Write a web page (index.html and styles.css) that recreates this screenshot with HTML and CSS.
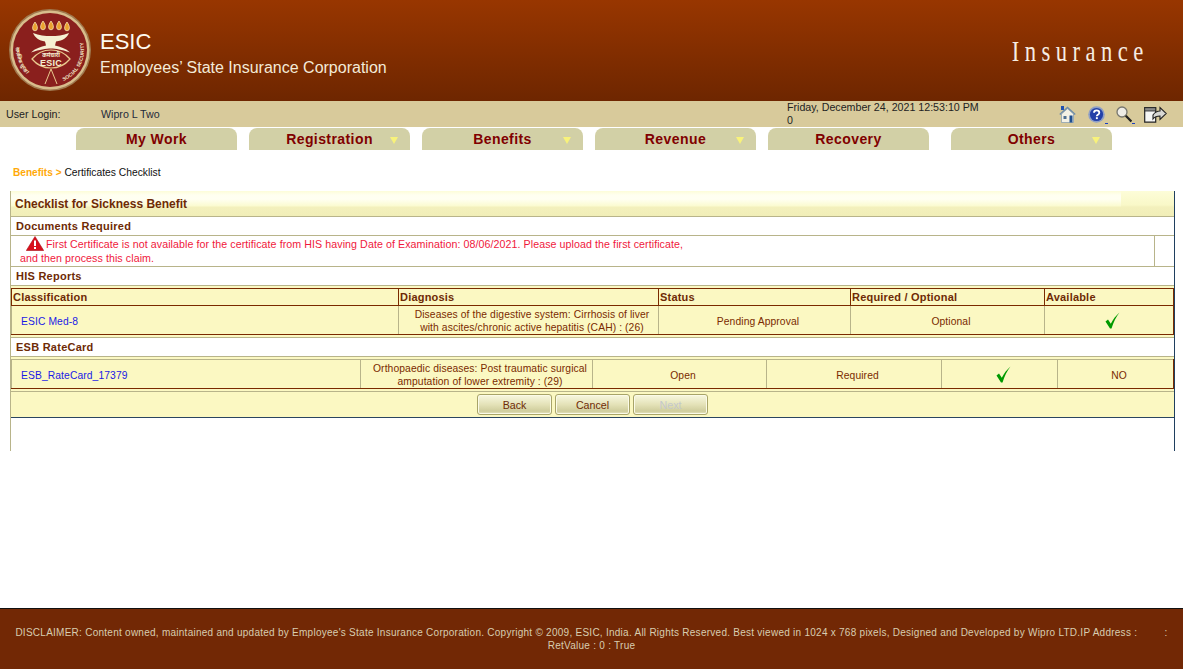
FILE: index.html
```html
<!DOCTYPE html>
<html lang="en">
<head>
<meta charset="utf-8">
<title>ESIC Insurance</title>
<link rel="stylesheet" href="styles.css">
</head>
<body>
<div class="page">
  <header class="banner">
    <svg class="logo" width="82" height="82" viewBox="0 0 82 82">
      <defs>
        <path id="arc-left" d="M7.500 38A33.500 33.500 0 0 0 30 72.600"/>
        <path id="arc-right" d="M54.500 72A33.500 33.500 0 0 0 74 33"/>
      </defs>
      <circle cx="41" cy="41" r="41" fill="#a07a50"/>
      <circle cx="41" cy="41" r="39.500" fill="#d8bd8c"/>
      <circle cx="41" cy="41" r="37" fill="#8a1f1d"/>
      <g fill="#eba22e" stroke="#fbeec0" stroke-width=".7">
        <path d="M26 13c1.800 2.500 2.400 4.300 2.400 6a2.400 2.800 0 0 1-4.800 0c0-1.700.6-3.500 2.400-6z"/>
        <path d="M34 12c1.800 2.500 2.400 4.300 2.400 6a2.400 2.800 0 0 1-4.800 0c0-1.700.6-3.500 2.400-6z"/>
        <path d="M42 12c1.800 2.500 2.400 4.300 2.400 6a2.400 2.800 0 0 1-4.800 0c0-1.700.6-3.500 2.400-6z"/>
        <path d="M50 12c1.800 2.500 2.400 4.300 2.400 6a2.400 2.800 0 0 1-4.800 0c0-1.700.6-3.500 2.400-6z"/>
        <path d="M58 13c1.800 2.500 2.400 4.300 2.400 6a2.400 2.800 0 0 1-4.800 0c0-1.700.6-3.500 2.400-6z"/>
      </g>
      <path d="M24 24c6 2.500 12 3 18 3s12-.5 18-3c-2 5-6 7.500-13 8.500l-1 4c5 1 11 3 15 7-9-3-14-4-19-4s-11 1-20 4c4-4 10-6 15-7l-1-4c-6-1-10-3.500-12-8.500z" fill="#f6efd2"/>
      <path d="M23 50C33 38 51 38 61 50 51 62 33 62 23 50z" fill="#8a1f1d" stroke="#e9c98e" stroke-width="1.200"/>
      <text class="logo-hi" x="42" y="47.500" text-anchor="middle">कर्मचारी</text>
      <text class="logo-en" x="42" y="57" text-anchor="middle">ESIC</text>
      <path d="M42 60 36 75M42 60l6 15" fill="none" stroke="#e9c98e" stroke-width="1"/>
      <text class="logo-side"><textPath href="#arc-left">सामाजिक सुरक्षा</textPath></text>
      <text class="logo-side"><textPath href="#arc-right">SOCIAL SECURITY</textPath></text>
    </svg>
    <div class="brand">
      <div class="brand-short">ESIC</div>
      <div class="brand-long">Employees’ State Insurance Corporation</div>
    </div>
    <div class="module">Insurance</div>
  </header>

  <div class="infobar">
    <span class="login-label">User Login:</span>
    <span class="login-name">Wipro L Two</span>
    <div class="clock"><div>Friday, December 24, 2021 12:53:10 PM</div><div>0</div></div>
    <div class="tools">
      <svg class="tool-home" width="17" height="17" viewBox="0 0 17 17">
        <path d="M.8 8.500 8.500 1.500l7.700 7" fill="none" stroke="#6e8ca8" stroke-width="1.500"/>
        <path d="M2.500 8 8.500 2.700 14.500 8v8.500h-12z" fill="#f4f1e4" stroke="#7f9ab0" stroke-width=".7"/>
        <rect x="4.500" y="10" width="3" height="3" fill="#4f6f8f"/>
        <rect x="10.500" y="9.500" width="3" height="7" fill="#1f4f8f"/>
        <rect x="2" y="0" width="3" height="4" fill="#2050b0"/>
      </svg>
      <span class="tool-help"><svg width="17" height="17" viewBox="0 0 17 17">
        <circle cx="8.500" cy="8.500" r="8.300" fill="#8f9fc6"/>
        <circle cx="8.500" cy="8.500" r="6.600" fill="#2340a8"/>
        <path d="M6 6.800c0-3.200 5.300-3.200 5.300 0 0 2-2.500 2-2.500 3.400" fill="none" stroke="#fff" stroke-width="1.800"/>
        <rect x="7.900" y="11.200" width="1.900" height="1.900" fill="#fff"/>
      </svg><i class="tick"></i></span>
      <span class="tool-find"><svg width="16" height="17" viewBox="0 0 16 17">
        <circle cx="6" cy="6" r="5" fill="#eeece6" stroke="#77776f" stroke-width="1.300"/>
        <path d="m9.800 9.800 5.600 5.700" stroke="#222" stroke-width="2.300"/>
      </svg><i class="tick"></i></span>
      <svg class="tool-exit" width="23" height="17" viewBox="0 0 23 17">
        <path d="M.7 1.700h11v14.500h-11z" fill="#f6f6f4" stroke="#222" stroke-width="1.200"/>
        <path d="M.7 1.700h11v3.300h-11z" fill="#8c8c8c" stroke="#222" stroke-width=".8"/>
        <path d="M9 9c2-3 5-4 7-4V1.500l6.300 6-6.300 6V10c-3 0-5 .5-7 3z" fill="#d8d8d4" stroke="#222" stroke-width="1.100"/>
      </svg>
    </div>
  </div>

  <nav class="menu">
    <a class="tab">My Work</a>
    <a class="tab has-sub">Registration</a>
    <a class="tab has-sub">Benefits</a>
    <a class="tab has-sub">Revenue</a>
    <a class="tab">Recovery</a>
    <a class="tab has-sub tab-last">Others</a>
  </nav>

  <div class="crumbs"><span class="crumb-root">Benefits &gt;</span> Certificates Checklist</div>

  <main class="panel">
    <h1 class="panel-title">Checklist for Sickness Benefit</h1>
    <h2 class="section">Documents Required</h2>
    <div class="message">
      <div class="message-text">
        <svg class="warn" width="18" height="15" viewBox="0 0 18 15"><path d="M9 .5 17.700 14.500H.3z" fill="#d8101c" stroke="#a80c14" stroke-width=".6"/><rect x="8" y="4.500" width="2" height="5.500" fill="#fff"/><rect x="8" y="11" width="2" height="2" fill="#fff"/></svg>First Certificate is not available for the certificate from HIS having Date of Examination: 08/06/2021. Please upload the first certificate,<br>and then process this claim.
      </div>
      <div class="message-end"></div>
    </div>
    <div class="report">
      <h2 class="section">HIS Reports</h2>
      <table class="grid">
        <colgroup><col class="h1"><col class="h2"><col class="h3"><col class="h4"><col class="h5"></colgroup>
        <tr class="head"><th>Classification</th><th>Diagnosis</th><th>Status</th><th>Required / Optional</th><th>Available</th></tr>
        <tr class="row-his">
          <td class="link-cell"><a>ESIC Med-8</a></td>
          <td>Diseases of the digestive system: Cirrhosis of liver<br>with ascites/chronic active hepatitis (CAH) : (26)</td>
          <td>Pending Approval</td>
          <td>Optional</td>
          <td class="check-cell"><svg class="check" width="15" height="17" viewBox="0 0 15 17"><path d="M.5 9.500 3 7.500l2.800 4.300C8 7.500 10.500 4 14.500.5 11 5 8.500 10 6.500 16.500H5z" fill="#009a00"/></svg></td>
        </tr>
      </table>
      <h2 class="section section-2">ESB RateCard</h2>
      <table class="grid grid-esb">
        <colgroup><col class="e1"><col class="e2"><col class="e3"><col class="e4"><col class="e5"><col class="e6"></colgroup>
        <tr class="row-esb">
          <td class="link-cell"><a>ESB_RateCard_17379</a></td>
          <td>Orthopaedic diseases: Post traumatic surgical<br>amputation of lower extremity : (29)</td>
          <td>Open</td>
          <td>Required</td>
          <td class="check-cell"><svg class="check" width="15" height="17" viewBox="0 0 15 17"><path d="M.5 9.500 3 7.500l2.800 4.300C8 7.500 10.500 4 14.500.5 11 5 8.500 10 6.500 16.500H5z" fill="#009a00"/></svg></td>
          <td>NO</td>
        </tr>
      </table>
      <div class="actions">
        <button class="btn">Back</button>
        <button class="btn">Cancel</button>
        <button class="btn btn-off">Next</button>
      </div>
    </div>
  </main>

  <footer class="footer">DISCLAIMER: Content owned, maintained and updated by Employee's State Insurance Corporation. Copyright © 2009, ESIC, India. All Rights Reserved. Best viewed in 1024 x 768 pixels, Designed and Developed by Wipro LTD.IP Address : &nbsp; &nbsp; &nbsp; &nbsp; :<br>RetValue : 0 : True</footer>
</div>
</body>
</html>
```
FILE: styles.css
```css
* { box-sizing: border-box; }
html, body { margin: 0; padding: 0; background: #fff; }
body { font-family: "Liberation Sans", Arial, sans-serif; font-size: 10.67px; color: #222; }
.page { height: 669px; display: flex; flex-direction: column; overflow: hidden; }

.banner { height: 101px; flex: none; display: flex; align-items: flex-start; color: #fff;
  background: linear-gradient(#983600, #6e2600); }
.logo { margin: 9px 0 0 9px; flex: none; }
.logo-hi { font: bold 5.500px "Noto Sans", "DejaVu Sans", sans-serif; fill: #f6efd2; }
.logo-en { font: bold 9px "Liberation Sans", sans-serif; fill: #f6efd2; letter-spacing: .3px; }
.logo-side { font: bold 5px "Liberation Sans", sans-serif; fill: #f0e6c6; letter-spacing: .1px; }
.brand { margin: 29px 0 0 9px; }
.brand-short { font-size: 22px; line-height: 26px; color: #fdfaf0; }
.brand-long { font-size: 16px; line-height: 22px; color: #f3ead8; margin-top: 2px; }
.module { margin: 34px 34px 0 auto; font: 29px/34px "Liberation Serif", serif; letter-spacing: 7px; color: #f6ece2;
  transform: scaleX(.78); transform-origin: right center; }

.infobar { height: 26px; flex: none; background: #d8ca9b; display: flex; color: #222; line-height: 13px; }
.login-label { margin: 7px 0 0 6px; width: 95px; }
.login-name { margin-top: 7px; width: 686px; color: #1f2a3a; }
.clock { line-height: 13px; width: 270px; }
.tools { display: flex; align-items: flex-start; padding: 5px 0 0 2px; }
.tool-help, .tool-find { display: flex; align-items: flex-end; }
.tool-help svg, .tool-find svg { flex: none; }
.tool-help { margin-left: 12px; }
.tool-find { margin-left: 8px; }
.tick { display: block; width: 3px; height: 1px; background: #1a3fc0; margin-bottom: -1px; }
.tool-exit { margin-left: 9px; }

.menu { height: 23px; margin-top: 1px; flex: none; padding-left: 76px; display: flex; gap: 12px; }
.tab { width: 161px; height: 22px; background: #d2d0a6; border-radius: 8px 8px 0 0; text-align: center;
  font: bold 14px/22px "Liberation Sans", sans-serif; letter-spacing: .42px; color: #800000; position: relative; }
.has-sub::after { content: ""; position: absolute; right: 12px; top: 9px; border: 4px solid transparent;
  border-top: 7px solid #f8f27a; border-bottom: 0; }
.tab-last { margin-left: 10px; }

.crumbs { margin: 15px 0 0 13px; height: 14px; line-height: 14px; flex: none; color: #111; font-size: 10.300px; }
.crumb-root { color: #ffa908; font-weight: bold; font-size: 10.100px; }

.panel { margin: 11px 8px 0 10px; height: 260px; flex: none; border-left: 1px solid #b8b48a; border-right: 1px solid #1f3f5f; }
.panel-title { margin: 0; height: 26px; padding: 1px 0 0 4px; font-size: 12px; line-height: 25px; color: #6e2a05;
  border-bottom: 1px solid #b8b48a;
  background:
    linear-gradient(#fdfdd8, #fffff0 4px, #fffff2 8px, #fbfbd0 15px, #f3f0bc 16px, #f1eeb8) left top / calc(100% - 53px) 100% no-repeat,
    linear-gradient(#fdfdd8, #f9f8c8 14px, #f3f0bc 16px, #f1eeb8) right top / 53px 100% no-repeat; }
.section { margin: 0; height: 19px; padding-left: 5px; font-size: 11px; line-height: 18px; color: #6e2a05;
  letter-spacing: .25px; border-bottom: 1px solid #b8b48a; background: #fff; }
.section-2 { margin-top: 2px; border-top: 1px solid #b8b48a; height: 20px; line-height: 18px; }
.message { height: 31px; display: flex; border-bottom: 1px solid #b8b48a; background: #fff; color: #f0183c; }
.message-text { flex: 1; padding: 1px 0 0 9px; line-height: 14px; letter-spacing: .07px; }
.warn { margin: -4px 2px -3px 6px; vertical-align: baseline; }
.message-end { width: 20px; border-left: 1px solid #b8b48a; }

.report { background: #fbf8c2; }
.grid { width: 1162px; table-layout: fixed; border-collapse: collapse; background: #fbf8c2; font-size: 10.300px; color: #7a2a00; margin-top: 2px; }
.grid td, .grid th { border: 1px solid #b8b48a; border-bottom: 1px solid #7a2a00; padding: 0; text-align: center; line-height: 13px; letter-spacing: .1px; }
.grid td { padding: 2px 0 0 7px; }
.grid th { font-size: 11px; text-align: left; padding-left: 1px; border: 1px solid #7a2a00; color: #6e2a05; letter-spacing: .2px; height: 17px; line-height: 15px; }
.grid td:last-child { border-right: 1px solid #7a2a00; }
.grid td.link-cell { text-align: left; padding-left: 9px; }
.grid td.check-cell { padding-top: 0; }
.link-cell a { color: #1a1ae6; }
.row-his td { height: 29px; }
.row-esb td { height: 29px; }
.check { display: block; margin: 0 auto; }
.h1 { width: 387px; } .h2 { width: 260px; } .h3 { width: 192px; } .h4 { width: 194px; } .h5 { width: 129px; }
.e1 { width: 349px; } .e2 { width: 232px; } .e3 { width: 174px; } .e4 { width: 175px; } .e5 { width: 116px; } .e6 { width: 116px; }

.actions { height: 27px; margin-top: 2px; border-top: 1px solid #b8b48a; border-bottom: 1px solid #2a4560; background: #fbf8c2;
  display: flex; justify-content: center; gap: 3px; padding-top: 2px; }
.btn { width: 75px; height: 21px; border: 1px solid #a8a468; border-radius: 3px; padding: 0; font: 10.670px "Liberation Sans", sans-serif;
  color: #6e2a05; background: linear-gradient(#f8f8e0, #e4e2b8 50%, #cfcd9c 85%, #e8e6c4);
  box-shadow: inset 0 0 0 1px #fbfbe8; }
.btn-off { color: #c4c8cc; }

.footer { margin-top: auto; height: 61px; flex: none; background: #722805; border-top: 1px solid #111; color: #d8cdb0;
  text-align: center; padding: 17px 8px 0; line-height: 13px; letter-spacing: .26px; font-size: 10px; }
```
